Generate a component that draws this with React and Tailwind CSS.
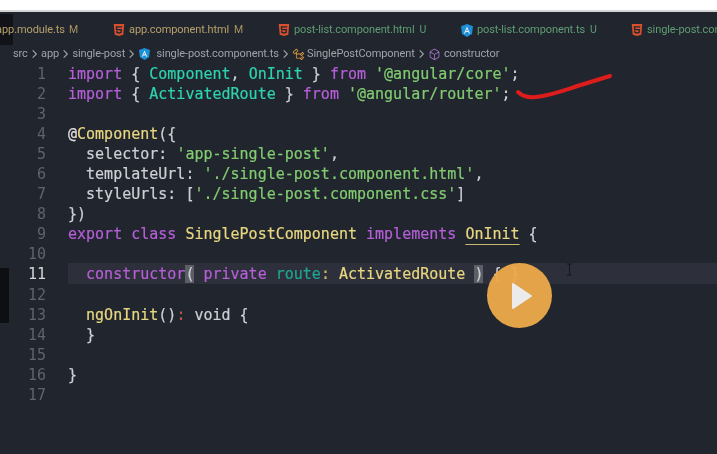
import { SiHtml5 } from "react-icons/si";
import { VscSymbolClass, VscSymbolMethod } from "react-icons/vsc";
import { LuChevronRight } from "react-icons/lu";

const KW = "text-[#b65fd8]";
const TEAL = "text-[#2ed3b0]";
const STR = "text-[#82cc70]";
const YEL = "text-[#e8d780]";
const TXT = "text-[#cdd0d4]";
const BRK = "bg-[#5c5f66]";

// each line is a list of [text, classes]
const LINES = [
  [["import", KW], [" { ", TXT], ["Component", TEAL], [", ", TXT], ["OnInit", TEAL], [" } ", TXT], ["from", KW], [" ", TXT], ["'@angular/core'", STR], [";", TXT]],
  [["import", KW], [" { ", TXT], ["ActivatedRoute", TEAL], [" } ", TXT], ["from", KW], [" ", TXT], ["'@angular/router'", STR], [";", TXT]],
  [],
  [["@", "text-[#e0e0e0]"], ["Component", YEL], ["({", TXT]],
  [["  selector", TXT], [": ", TXT], ["'app-single-post'", STR], [",", TXT]],
  [["  templateUrl", TXT], [": ", TXT], ["'./single-post.component.html'", STR], [",", TXT]],
  [["  styleUrls", TXT], [": [", TXT], ["'./single-post.component.css'", STR], ["]", TXT]],
  [["})", TXT]],
  [["export", KW], [" ", TXT], ["class", KW], [" ", TXT], ["SinglePostComponent", YEL], [" ", TXT], ["implements", KW], [" ", TXT], ["OnInit", `${YEL} underline decoration-[#c9b96f] underline-offset-[5px]`], [" {", TXT]],
  [],
  [["  ", TXT], ["constructor", KW], ["(", `${TXT} ${BRK}`], [" ", TXT], ["private", KW], [" ", TXT], ["route", "text-[#1fa593]"], [": ", "text-[#c9b96f]"], ["ActivatedRoute", YEL], [" ", TXT], [")", `${TXT} ${BRK}`], [" { }", TXT]],
  [],
  [["  ", TXT], ["ngOnInit", YEL], ["()", TXT], [": ", "text-[#c9564f]"], ["void", TXT], [" {", TXT]],
  [["  }", TXT]],
  [],
  [["}", TXT]],
  [],
];

const TABS = [
  { name: "app.component.html", flag: "M", color: "text-[#b8a06a]", flagColor: "text-[#a8925f]", icon: "html", width: "w-[165px]" },
  { name: "post-list.component.html", flag: "U", color: "text-[#5f9e72]", flagColor: "text-[#5f9e72]", icon: "html", width: "w-[183px]" },
  { name: "post-list.component.ts", flag: "U", color: "text-[#5f9e72]", flagColor: "text-[#5f9e72]", icon: "ng", width: "w-[170px]" },
  { name: "single-post.component.html", flag: "", color: "text-[#5f9e72]", flagColor: "", icon: "html", width: "w-[86px]" },
];

// old style shield, the package logo is the newer one
const NgIcon = ({ className }) => (
  <svg viewBox="0 0 12 13" className={className}>
    <path d="M6 0 L12 2.2 L11 10 L6 13 L1 10 L0 2.2 Z" fill="#1c8fd6" />
    <path d="M6 2.4 L2.9 9.6 H4.1 L4.7 8 H7.3 L7.9 9.6 H9.1 Z M5.2 6.9 L6 5 L6.8 6.9 Z" fill="#dbeaf5" fillRule="evenodd" />
  </svg>
);

const Tab = ({ tab }) => (
  <div className={`flex items-center shrink-0 overflow-hidden ${tab.width}`}>
    {tab.icon === "html" ? (
      <SiHtml5 className="text-[#d9502e] w-[12px] h-[12px] shrink-0" />
    ) : (
      <NgIcon className="w-[12px] h-[13px] shrink-0" />
    )}
    <span className={`ml-[4px] ${tab.color}`}>{tab.name}</span>
    {tab.flag && <span className={`ml-[5px] text-[10.5px] ${tab.flagColor}`}>{tab.flag}</span>}
  </div>
);

const Chevron = () => <LuChevronRight className="w-[13.3px] h-[14px] text-[#a0a3a8] shrink-0" />;

export default function App() {
  return (
    <div className="relative w-[717px] h-[454px] bg-white overflow-hidden">
      <div className="mt-[10px] h-[444px] bg-[#21252e] flex flex-col border-t-2 border-[#d4d4d4] blur-[0.5px]">
        {/* tab bar */}
        <div className="h-[34px] pt-[2px] flex items-center overflow-hidden whitespace-nowrap text-[11px] tracking-[-0.1px] font-['Roboto',sans-serif]">
          <div className="relative shrink-0 w-[113px] h-[32px] flex items-center overflow-hidden">
            <div className="absolute left-0 top-0 w-[13px] h-[31px] bg-[#111318]" />
            <div className="relative w-[78px] flex justify-end shrink-0">
              <span className="text-[#b8a06a]">app.module.ts</span>
              <span className="ml-[4px] text-[10.5px] text-[#a8925f]">M</span>
            </div>
          </div>
          {TABS.map((t) => (
            <Tab key={t.name} tab={t} />
          ))}
        </div>

        {/* breadcrumb */}
        <div className="h-[17px] pb-[1px] pl-[13px] flex items-center whitespace-nowrap text-[11px] tracking-[-0.1px] text-[#a0a3a8] font-['Roboto',sans-serif]">
          <span>src</span>
          <Chevron />
          <span>app</span>
          <Chevron />
          <span>single-post</span>
          <Chevron />
          <NgIcon className="w-[11px] h-[12px] mr-[6px] ml-[1px]" />
          <span>single-post.component.ts</span>
          <Chevron />
          <VscSymbolClass className="w-[13px] h-[13px] text-[#dc9a3f] mr-[2px]" />
          <span>SinglePostComponent</span>
          <Chevron />
          <VscSymbolMethod className="w-[13px] h-[13px] text-[#a574c9] mr-[3px]" />
          <span>constructor</span>
        </div>

        {/* code */}
        <div className="flex-1 font-['DejaVu_Sans_Mono',monospace] text-[15px] whitespace-pre [-webkit-text-stroke:0.2px]">
          {LINES.map((parts, i) => (
            <div key={i} className="flex h-[20.06px] leading-[20.06px]">
              <span className={`w-[46px] pt-[1px] text-right shrink-0 [-webkit-text-stroke:0] ${i === 10 ? "text-[#d6d6d6]" : "text-[#5e636c]"}`}>{i + 1}</span>
              <div className={`ml-[22px] pt-[1px] flex-1 ${i === 10 ? "bg-[#2d303a]" : ""}`}>
                {parts.map(([text, cls], j) => (
                  <span key={j} className={cls}>{text}</span>
                ))}
              </div>
            </div>
          ))}
        </div>
      </div>

      {/* overlays from the video player */}
      <div className="absolute left-0 top-[268px] w-[9px] h-[55px] bg-[#0e0f12]" />
      <svg className="absolute left-[510px] top-[68px]" width="110" height="36" viewBox="0 0 110 36" fill="none">
        <path d="M8 24 C12 28 17 30 26 29 C44 27 60 20 74 16 L100 8" stroke="#dd1c1c" strokeWidth="4" strokeLinecap="round" />
      </svg>
      <div className="absolute left-[487px] top-[263px] w-[65px] h-[65px] rounded-full bg-[#eeaa4a]/95 flex items-center justify-center">
        <svg width="22" height="28" viewBox="0 0 22 28" className="ml-[4px]">
          <path d="M2 2 L20 14 L2 26 Z" fill="#ebebeb" stroke="#ebebeb" strokeWidth="2" strokeLinejoin="round" />
        </svg>
      </div>
      <svg className="absolute left-[566px] top-[263px]" width="7" height="13" viewBox="0 0 7 13" fill="none">
        <path d="M1 1 H6 M3.5 1 V12 M1 12 H6" stroke="#15171c" strokeWidth="1" />
      </svg>
    </div>
  );
}
